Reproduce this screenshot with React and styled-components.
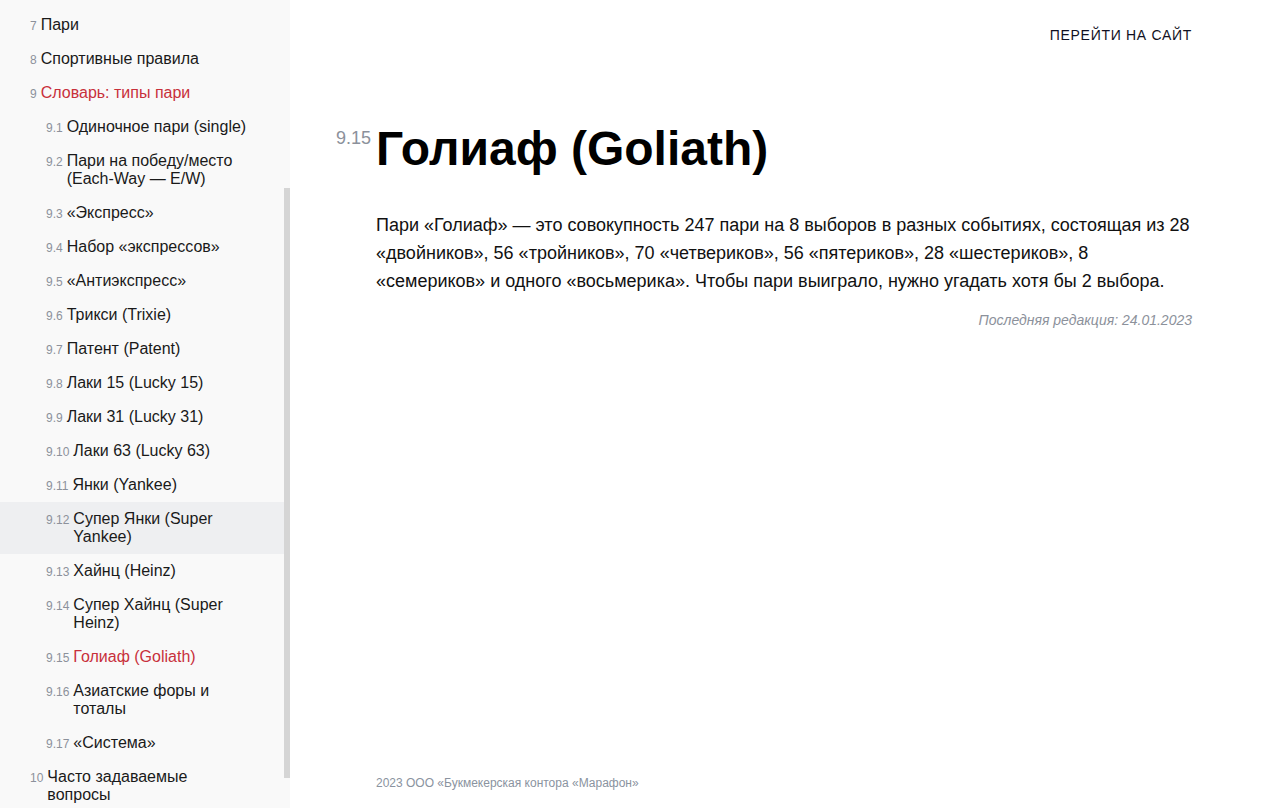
import React from "react";
import styled, { createGlobalStyle } from "styled-components";

const GlobalStyle = createGlobalStyle`
  html, body {
    margin: 0;
    padding: 0;
    background: #ffffff;
  }
  body {
    font-family: "Liberation Sans", Arial, sans-serif;
    color: #111111;
  }
`;

const Page = styled.div`
  display: flex;
  width: 100%;
  height: 808px;
  overflow: hidden;
`;

const Sidebar = styled.aside`
  position: relative;
  flex: 0 0 290px;
  height: 808px;
  background: #f9f9f9;
  overflow: hidden;
`;

const Toc = styled.ul`
  list-style: none;
  margin: 0;
  padding: 8px 0 0 0;
  width: 284px;
`;

const TocItem = styled.li`
  display: flex;
  align-items: baseline;
  gap: 4px;
  padding: 8px 34px 8px ${(p) => (p.$level === 2 ? 46 : 30)}px;
  font-size: 16px;
  line-height: 18px;
  color: ${(p) => (p.$active ? "#c8303b" : "#1a1a1a")};
  background: ${(p) => (p.$hover ? "#eeeff1" : "transparent")};
  cursor: pointer;
`;

const TocNum = styled.span`
  flex: 0 0 auto;
  font-size: 12px;
  line-height: 12px;
  color: #8c919b;
`;

const TocText = styled.span`
  flex: 1 1 auto;
`;

/* the list is scrolled down; this is the scrollbar thumb on its right edge */
const ScrollThumb = styled.div`
  position: absolute;
  top: 188px;
  right: 0;
  width: 6px;
  height: 590px;
  background: #d5d5d5;
`;

const Main = styled.main`
  flex: 1 1 auto;
  display: flex;
  flex-direction: column;
  height: 808px;
  padding: 0 79px 0 86px;
  box-sizing: border-box;
`;

const Header = styled.header`
  display: flex;
  justify-content: flex-end;
  padding-top: 26px;
  height: 70px;
  box-sizing: border-box;
`;

const SiteLink = styled.a`
  font-size: 14px;
  line-height: 18px;
  letter-spacing: 0.7px;
  color: #111122;
  text-decoration: none;
  text-transform: uppercase;
`;

const Article = styled.article`
  width: 816px;
`;

const Title = styled.h1`
  display: flex;
  align-items: flex-start;
  margin: 51px 0 0 -40px;
  font-size: 48px;
  line-height: 56px;
  font-weight: 700;
  color: #000000;
`;

const TitleNum = styled.span`
  flex: 0 0 40px;
  padding-top: 8px;
  box-sizing: border-box;
  font-size: 18px;
  line-height: 18px;
  font-weight: 400;
  color: #8c919b;
`;

const Paragraph = styled.p`
  margin: 34px 0 0;
  font-size: 18px;
  line-height: 28px;
  color: #111111;
`;

const Edited = styled.div`
  margin-top: 16px;
  text-align: right;
  font-size: 14px;
  line-height: 18px;
  font-style: italic;
  color: #8c919b;
`;

const Footer = styled.footer`
  margin-top: auto;
  padding-bottom: 16px;
  font-size: 12px;
  line-height: 18px;
  color: #8a93a0;
`;

const toc = [
  { num: "7", text: "Пари" },
  { num: "8", text: "Спортивные правила" },
  { num: "9", text: "Словарь: типы пари", active: true },
  { num: "9.1", text: "Одиночное пари (single)", level: 2 },
  { num: "9.2", text: "Пари на победу/место (Each-Way — E/W)", level: 2 },
  { num: "9.3", text: "«Экспресс»", level: 2 },
  { num: "9.4", text: "Набор «экспрессов»", level: 2 },
  { num: "9.5", text: "«Антиэкспресс»", level: 2 },
  { num: "9.6", text: "Трикси (Trixie)", level: 2 },
  { num: "9.7", text: "Патент (Patent)", level: 2 },
  { num: "9.8", text: "Лаки 15 (Lucky 15)", level: 2 },
  { num: "9.9", text: "Лаки 31 (Lucky 31)", level: 2 },
  { num: "9.10", text: "Лаки 63 (Lucky 63)", level: 2 },
  { num: "9.11", text: "Янки (Yankee)", level: 2 },
  { num: "9.12", text: "Супер Янки (Super Yankee)", level: 2, hover: true },
  { num: "9.13", text: "Хайнц (Heinz)", level: 2 },
  { num: "9.14", text: "Супер Хайнц (Super Heinz)", level: 2 },
  { num: "9.15", text: "Голиаф (Goliath)", level: 2, active: true },
  { num: "9.16", text: "Азиатские форы и тоталы", level: 2 },
  { num: "9.17", text: "«Система»", level: 2 },
  { num: "10", text: "Часто задаваемые вопросы" },
];

export default function App() {
  return (
    <>
      <GlobalStyle />
      <Page>
        <Sidebar>
          <Toc>
            {toc.map((item) => (
              <TocItem
                key={item.num}
                $level={item.level || 1}
                $active={item.active}
                $hover={item.hover}
              >
                <TocNum>{item.num}</TocNum>
                <TocText>{item.text}</TocText>
              </TocItem>
            ))}
          </Toc>
          <ScrollThumb />
        </Sidebar>
        <Main>
          <Header>
            <SiteLink href="#">Перейти на сайт</SiteLink>
          </Header>
          <Article>
            <Title>
              <TitleNum>9.15</TitleNum>
              <span>Голиаф (Goliath)</span>
            </Title>
            <Paragraph>
              Пари «Голиаф» — это совокупность 247 пари на 8 выборов в разных
              событиях, состоящая из 28 «двойников», 56 «тройников», 70
              «четвериков», 56 «пятериков», 28 «шестериков», 8 «семериков» и
              одного «восьмерика». Чтобы пари выиграло, нужно угадать хотя бы 2
              выбора.
            </Paragraph>
            <Edited>Последняя редакция: 24.01.2023</Edited>
          </Article>
          <Footer>2023 ООО «Букмекерская контора «Марафон»</Footer>
        </Main>
      </Page>
    </>
  );
}
